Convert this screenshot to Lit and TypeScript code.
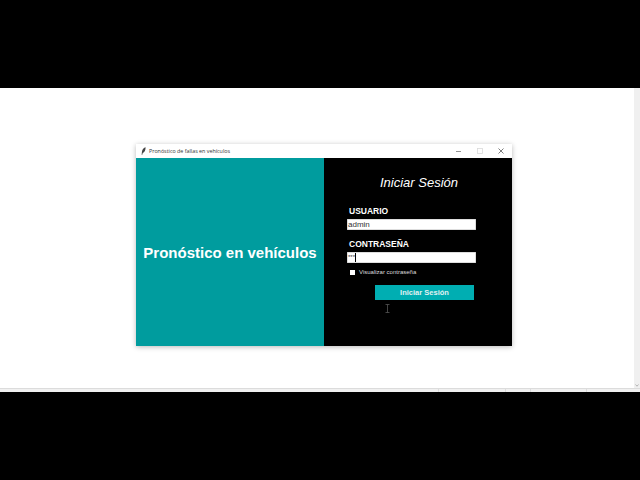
import { LitElement, html, css } from "lit";
import { customElement } from "lit/decorators.js";

@customElement("app-root")
export class AppRoot extends LitElement {
  static styles = css`
    :host { display: flex; flex-direction: column; width: 640px; height: 480px; background: #000; font-family: "Liberation Sans", Arial, sans-serif; overflow: hidden; }
    .band { height: 88px; flex: none; background: #000; }
    .screen { height: 304px; flex: none; background: #fff; display: flex; flex-direction: column; }
    .doc { flex: none; height: 300px; display: flex; }
    .canvas { flex: 1; padding: 56px 0 0 136px; }
    .scroll { width: 6px; background: #f0f0f0; display: flex; flex-direction: column; justify-content: flex-end; align-items: center; padding-bottom: 1px; box-sizing: border-box; }
    .scroll svg { display: block; }
    .status { flex: none; height: 4px; background: #f0f0f0; border-top: 1px solid #dcdcdc; box-sizing: border-box; display: flex; }
    .status i { border-right: 1px solid #dcdcdc; height: 3px; }
    .s1 { width: 438px; } .s2 { width: 66px; } .s3 { width: 24px; } .s4 { width: 55px; }
    .window { width: 376px; height: 202px; display: flex; flex-direction: column; background: #fff; box-shadow: 0 1px 5px rgba(0,0,0,.28); }
    .titlebar { height: 14px; flex: none; display: flex; align-items: center; background: #fff; color: #333; }
    .feather { margin-left: 5px; margin-right: 3px; display: block; }
    .title { flex: 1; font-family: "Open Sans", sans-serif; font-size: 5.35px; white-space: nowrap; }
    .ctls { display: flex; padding-right: 1px; }
    .ctl { width: 21px; height: 14px; display: flex; align-items: center; justify-content: center; }
    .ctl svg { display: block; }
    .body { flex: 1; display: flex; min-height: 0; }
    .left { width: 188px; background: #009c9e; display: flex; align-items: center; justify-content: center; color: #fff; font-weight: 700; font-size: 15px; white-space: nowrap; }
    .right { flex: 1; background: #000; color: #fff; display: flex; flex-direction: column; padding-left: 23px; }
    .heading { font-style: italic; font-size: 13px; margin: 17px 0 0 33px; line-height: 16px; }
    .lbl { font-weight: 700; font-size: 8.5px; line-height: 10px; margin-left: 2px; }
    .u { margin-top: 15px; }
    .c { margin-top: 9px; }
    .inp { width: 129px; height: 11px; background: #fff; color: #333; font-size: 8px; line-height: 11px; margin-top: 3px; display: flex; align-items: center; white-space: nowrap; box-shadow: inset 0 0 0 .5px #bbb; padding-left: 1px; box-sizing: border-box; }
    .caret { width: 1px; height: 9px; background: #000; }
    .stars { font-size: 6px; line-height: 11px; }
    .check { display: flex; align-items: center; font-size: 6px; color: #ddd; margin: 5px 0 0 3px; height: 8px; }
    .box { width: 5px; height: 5px; background: #fff; margin-right: 4px; }
    .btn { width: 99px; height: 15px; background: #00aeb2; color: #e0f2f2; font-weight: 700; font-size: 7.5px; display: flex; align-items: center; justify-content: center; margin: 9px 0 0 28px; }
    .cursor { position: absolute; left: 385px; top: 304px; display: block; }
  `;

  render() {
    return html`
      <div class="band"></div>
      <div class="screen">
        <div class="doc">
          <div class="canvas">
            <div class="window">
              <div class="titlebar">
                <svg class="feather" width="5" height="8" viewBox="0 0 5 8"><path d="M4.6 .2C2.8 .5 1.2 2.2 1 4.6L.6 7.7l.7.1.4-1.8C3.6 5.6 4.6 3 4.6 .2z" fill="#444"/></svg>
                <span class="title">Pronóstico de fallas en vehículos</span>
                <div class="ctls">
                  <div class="ctl"><svg width="5" height="5" viewBox="0 0 5 5"><path d="M0 2.5h5" stroke="#777" stroke-width=".8"/></svg></div>
                  <div class="ctl"><svg width="6" height="6" viewBox="0 0 6 6"><rect x=".5" y=".5" width="5" height="5" fill="none" stroke="#dadada" stroke-width=".8"/></svg></div>
                  <div class="ctl"><svg width="6" height="6" viewBox="0 0 6 6"><path d="M.5.5l5 5M5.5.5l-5 5" stroke="#444" stroke-width=".7"/></svg></div>
                </div>
              </div>
              <div class="body">
                <div class="left">Pronóstico en vehículos</div>
                <div class="right">
                  <div class="heading">Iniciar Sesión</div>
                  <div class="lbl u">USUARIO</div>
                  <div class="inp">admin</div>
                  <div class="lbl c">CONTRASEÑA</div>
                  <div class="inp"><span class="stars">***</span><span class="caret"></span></div>
                  <div class="check"><span class="box"></span>Visualizar contraseña</div>
                  <div class="btn">Iniciar Sesión</div>
                </div>
              </div>
            </div>
          </div>
          <div class="scroll"><svg width="4" height="3" viewBox="0 0 4 3"><path d="M.5.5L2 2.2 3.5.5" fill="none" stroke="#999" stroke-width=".7"/></svg></div>
        </div>
        <div class="status"><i class="s1"></i><i class="s2"></i><i class="s3"></i><i class="s4"></i></div>
      </div>
      <div class="band"></div>
      <svg class="cursor" width="5" height="9" viewBox="0 0 5 9"><path d="M.5.5h4M.5 8.5h4M2.5.5v8" fill="none" stroke="#555" stroke-width=".8"/></svg>
    `;
  }
}
